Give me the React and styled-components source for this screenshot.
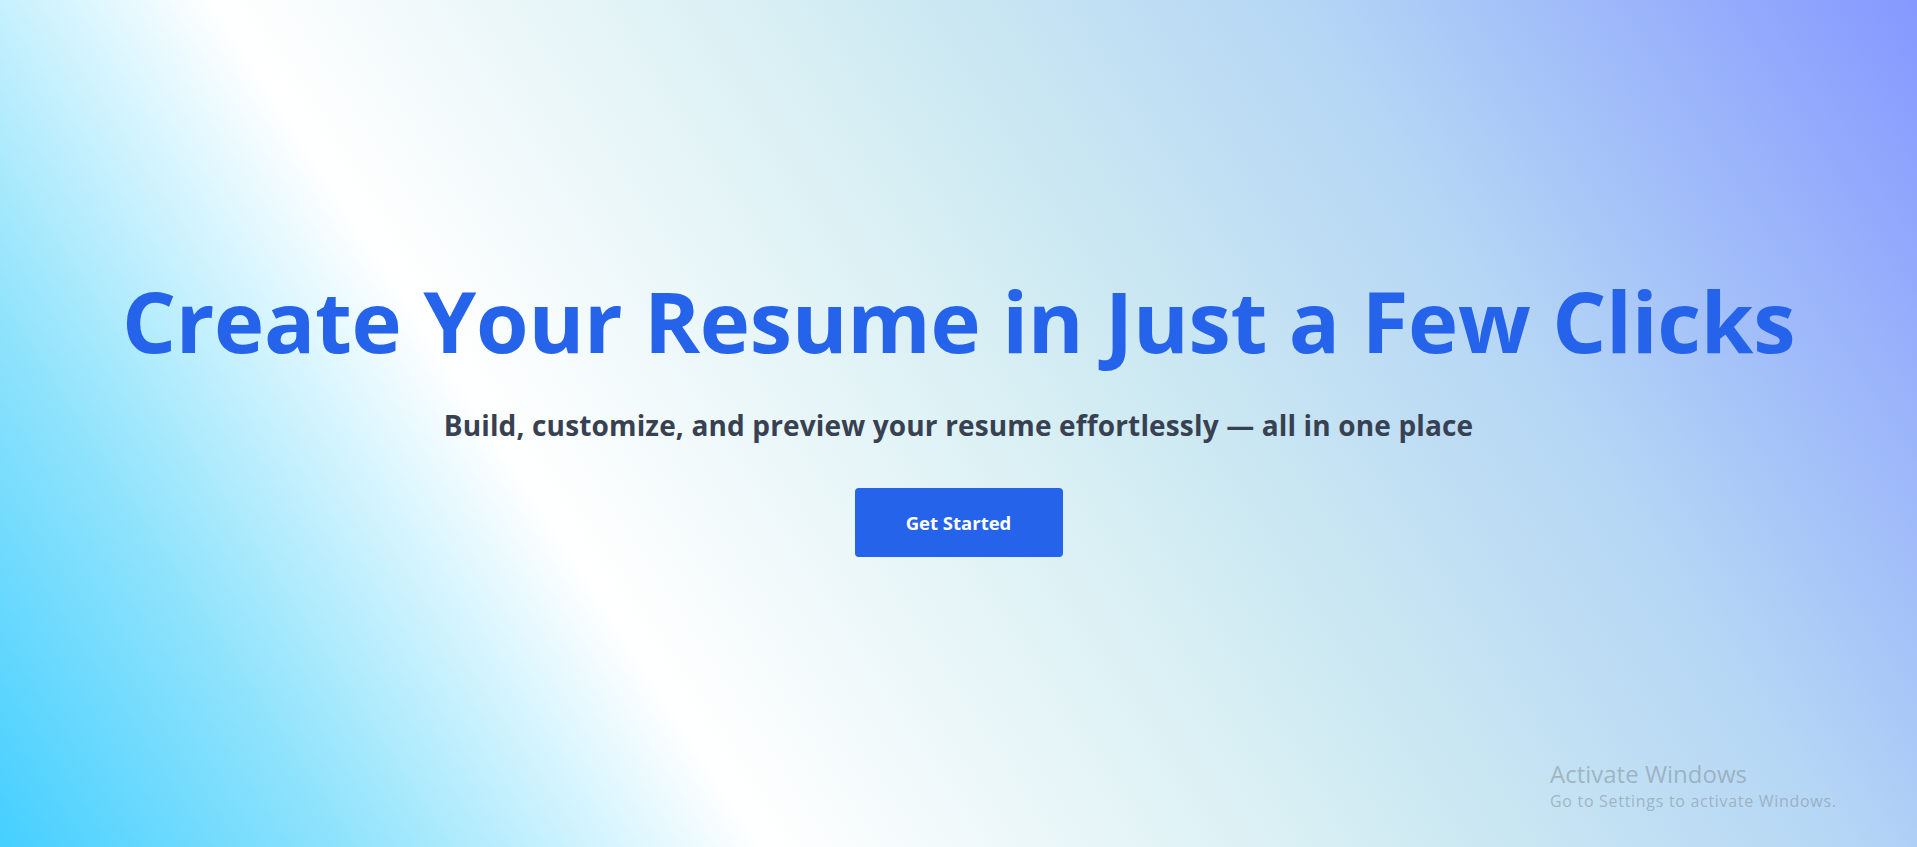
import React from 'react';
import styled, { createGlobalStyle } from 'styled-components';

const GlobalStyle = createGlobalStyle`
  * { box-sizing: border-box; }
  html, body {
    margin: 0;
    padding: 0;
  }
  body {
    font-family: "Open Sans", "Noto Sans", "DejaVu Sans", sans-serif;
  }
`;

const Hero = styled.section`
  position: relative;
  min-height: 100vh;
  display: flex;
  flex-direction: column;
  align-items: center;
  justify-content: center;
  text-align: center;
  padding: 0 24px 18px;
  overflow: hidden;
  background: linear-gradient(
    57deg,
    #45cfff 0%,
    #8fe3fc 14%,
    #ffffff 31%,
    #daf0f4 52%,
    #cbe8f2 60%,
    #b5d6f5 75%,
    #8598ff 100%
  );
`;

const Title = styled.h1`
  margin: 0;
  color: #2563eb;
  font-size: 85px;
  font-weight: 700;
  line-height: 1.15;
  letter-spacing: -0.3px;
`;

const Subtitle = styled.p`
  margin: 36px 0 0 0;
  color: #374151;
  font-size: 28px;
  font-weight: 700;
  letter-spacing: 0.15px;
`;

const CtaButton = styled.button`
  margin-top: 44px;
  width: 208px;
  height: 69px;
  border: none;
  border-radius: 4px;
  background: #2563eb;
  color: #fff;
  font-family: inherit;
  font-size: 18.5px;
  font-weight: 700;
  cursor: pointer;
  transition: background 0.2s;

  &:hover {
    background: #1d4ed8;
  }
`;

const Watermark = styled.div`
  position: absolute;
  left: 1550px;
  top: 758px;
  text-align: left;
  color: rgba(125, 135, 145, 0.5);
  font-family: "Open Sans", "Noto Sans", sans-serif;
  pointer-events: none;
`;

const WatermarkTitle = styled.div`
  font-size: 24px;
  font-weight: 400;
  line-height: 1.3;
`;

const WatermarkText = styled.div`
  font-size: 16px;
  letter-spacing: 0.7px;
  line-height: 1.6;
`;

export default function App() {
  return (
    <>
      <GlobalStyle />
      <Hero>
        <Title>Create Your Resume in Just a Few Clicks</Title>
        <Subtitle>Build, customize, and preview your resume effortlessly — all in one place</Subtitle>
        <CtaButton>Get Started</CtaButton>
        <Watermark>
          <WatermarkTitle>Activate Windows</WatermarkTitle>
          <WatermarkText>Go to Settings to activate Windows.</WatermarkText>
        </Watermark>
      </Hero>
    </>
  );
}
